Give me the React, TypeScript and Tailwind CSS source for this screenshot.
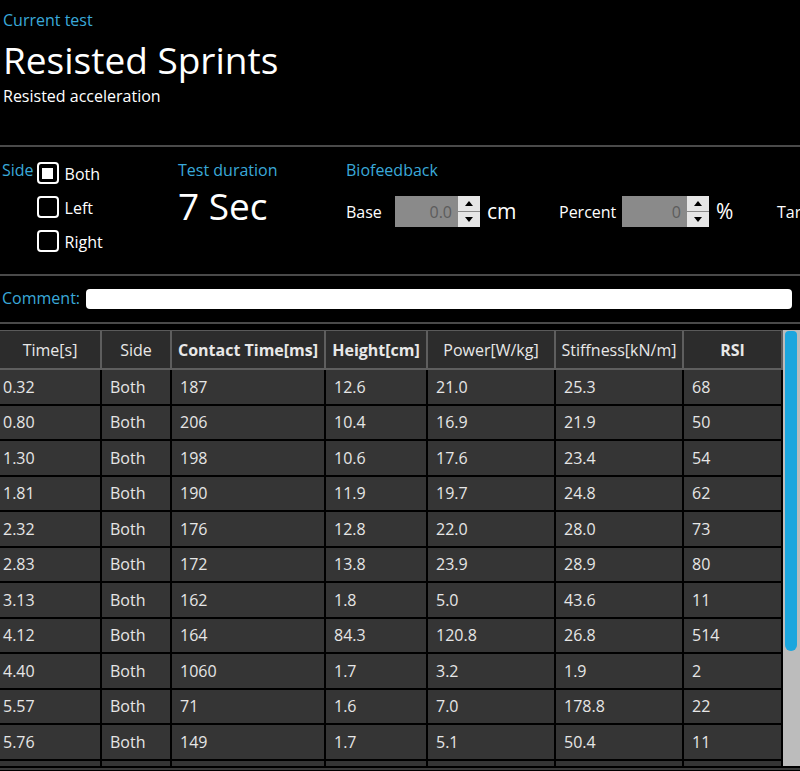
import React from "react";

const FONT = { fontFamily: '"Open Sans", "Noto Sans", sans-serif' };

const rows = [
  ["0.32", "Both", "187", "12.6", "21.0", "25.3", "68"],
  ["0.80", "Both", "206", "10.4", "16.9", "21.9", "50"],
  ["1.30", "Both", "198", "10.6", "17.6", "23.4", "54"],
  ["1.81", "Both", "190", "11.9", "19.7", "24.8", "62"],
  ["2.32", "Both", "176", "12.8", "22.0", "28.0", "73"],
  ["2.83", "Both", "172", "13.8", "23.9", "28.9", "80"],
  ["3.13", "Both", "162", "1.8", "5.0", "43.6", "11"],
  ["4.12", "Both", "164", "84.3", "120.8", "26.8", "514"],
  ["4.40", "Both", "1060", "1.7", "3.2", "1.9", "2"],
  ["5.57", "Both", "71", "1.6", "7.0", "178.8", "22"],
  ["5.76", "Both", "149", "1.7", "5.1", "50.4", "11"],
  ["", "", "", "", "", "", ""],
];

const columns = [
  { title: "Time[s]", w: "w-[102px]", bold: false },
  { title: "Side", w: "w-[70px]", bold: false },
  { title: "Contact Time[ms]", w: "w-[154px]", bold: true },
  { title: "Height[cm]", w: "w-[102px]", bold: true },
  { title: "Power[W/kg]", w: "w-[128px]", bold: false },
  { title: "Stiffness[kN/m]", w: "w-[128px]", bold: false },
  { title: "RSI", w: "w-[99px]", bold: true },
];

function Checkbox({ label, checked }: { label: string; checked?: boolean }) {
  return (
    <div className="flex items-center gap-[6px] h-[34px]">
      <div className="w-[22px] h-[22px] rounded-[4px] border-[2.5px] border-white flex items-center justify-center">
        {checked && <div className="w-[11px] h-[11px] bg-white" />}
      </div>
      <span className="text-[16px] text-white mt-[2px]">{label}</span>
    </div>
  );
}

function Spinner({ value, w }: { value: string; w: string }) {
  return (
    <div className="flex h-[31px] shrink-0">
      <div className={`${w} bg-[#8a8a8a] text-[#5c5c5c] text-[16px] flex items-center justify-end pr-[6px]`}>{value}</div>
      <div className="w-[22px] flex flex-col gap-[1px] bg-[#8a8a8a]">
        <div className="flex-1 bg-[#e6e6e6] flex items-center justify-center">
          <div className="w-0 h-0 border-l-[4px] border-r-[4px] border-b-[5px] border-l-transparent border-r-transparent border-b-black" />
        </div>
        <div className="flex-1 bg-[#e6e6e6] flex items-center justify-center">
          <div className="w-0 h-0 border-l-[4px] border-r-[4px] border-t-[5px] border-l-transparent border-r-transparent border-t-black" />
        </div>
      </div>
    </div>
  );
}

export default function App() {
  return (
    <div className="w-[800px] h-[771px] bg-black overflow-hidden flex flex-col" style={FONT}>
      {/* header */}
      <div className="h-[145px] shrink-0 px-[3px] pt-[9px] flex flex-col">
        <div className="text-[16px] leading-[22px] text-[#3aa9d9]">Current test</div>
        <div className="text-[37px] leading-[50px] mt-[4px] text-white">Resisted Sprints</div>
        <div className="text-[16px] leading-[22px] text-white">Resisted acceleration</div>
      </div>
      <div className="h-[2px] shrink-0 bg-[#4a4a4a]" />

      {/* settings */}
      <div className="h-[127px] shrink-0 flex pt-[12px] overflow-hidden">
        <div className="flex w-[178px] shrink-0 pl-[2px]">
          <span className="text-[16px] leading-[22px] text-[#3aa9d9] pr-[3px]">Side</span>
          <div className="flex flex-col -mt-[3px]">
            <Checkbox label="Both" checked />
            <Checkbox label="Left" />
            <Checkbox label="Right" />
          </div>
        </div>
        <div className="w-[168px] shrink-0 flex flex-col">
          <span className="text-[16px] leading-[22px] text-[#3aa9d9]">Test duration</span>
          <span className="text-[37px] leading-[44px] mt-[3px] text-white">7 Sec</span>
        </div>
        <div className="flex flex-col shrink-0">
          <span className="text-[16px] leading-[22px] text-[#3aa9d9]">Biofeedback</span>
          <div className="flex items-center mt-[15px] whitespace-nowrap">
            <span className="text-[16px] text-white w-[49px] shrink-0">Base</span>
            <Spinner value="0.0" w="w-[63px]" />
            <span className="text-[21px] text-white ml-[7px] w-[72px] shrink-0">cm</span>
            <span className="text-[16px] text-white w-[63px] shrink-0">Percent</span>
            <Spinner value="0" w="w-[65px]" />
            <span className="text-[21px] text-white ml-[7px] w-[61px] shrink-0">%</span>
            <span className="text-[16px] text-white">Target</span>
          </div>
        </div>
      </div>
      <div className="h-[2px] shrink-0 bg-[#4a4a4a]" />

      {/* comment */}
      <div className="h-[46px] shrink-0 flex items-center pl-[2px] gap-[6px]">
        <span className="text-[16px] text-[#3aa9d9] -mt-[2px]">Comment:</span>
        <div className="flex-1 h-[20px] bg-white rounded-[4px] mr-[8px] -mt-[1px]" />
      </div>
      <div className="h-[2px] shrink-0 bg-[#4a4a4a]" />

      {/* table */}
      <div className="flex mt-[6px] h-[436px] shrink-0 overflow-hidden">
        <div className="flex flex-col w-[783px]">
          <div className="flex h-[40px] shrink-0 bg-[#2c2c2c] border-t border-[#5a5a5a]">
            {columns.map((c) => (
              <div
                key={c.title}
                className={`${c.w} shrink-0 border-r-2 border-b-2 border-[#5e5e5e] flex items-center justify-center text-[16px] text-[#e8e8e8] ${c.bold ? "font-bold" : ""}`}
              >
                {c.title}
              </div>
            ))}
          </div>
          {rows.map((r, i) => (
            <div key={i} className="flex h-[35.5px] shrink-0">
              {r.map((v, j) => (
                <div
                  key={j}
                  className={`${columns[j].w} shrink-0 border-r-2 border-b-2 border-black bg-[#353535] flex items-center ${j === 0 ? "pl-[3px]" : "pl-[8px]"} text-[16px] text-[#e6e6e6]`}
                >
                  {v}
                </div>
              ))}
            </div>
          ))}
        </div>
        <div className="w-[17px] bg-[#bcbcbc] pl-[2px] pr-[3px]">
          <div className="w-[12px] h-[320px] bg-[#1ba6de] rounded-b-[6px] rounded-t-[4px] mt-[1px]" />
        </div>
      </div>
      <div className="h-[2px] shrink-0 bg-[#3a3a3a] mt-[2px]" />
    </div>
  );
}
